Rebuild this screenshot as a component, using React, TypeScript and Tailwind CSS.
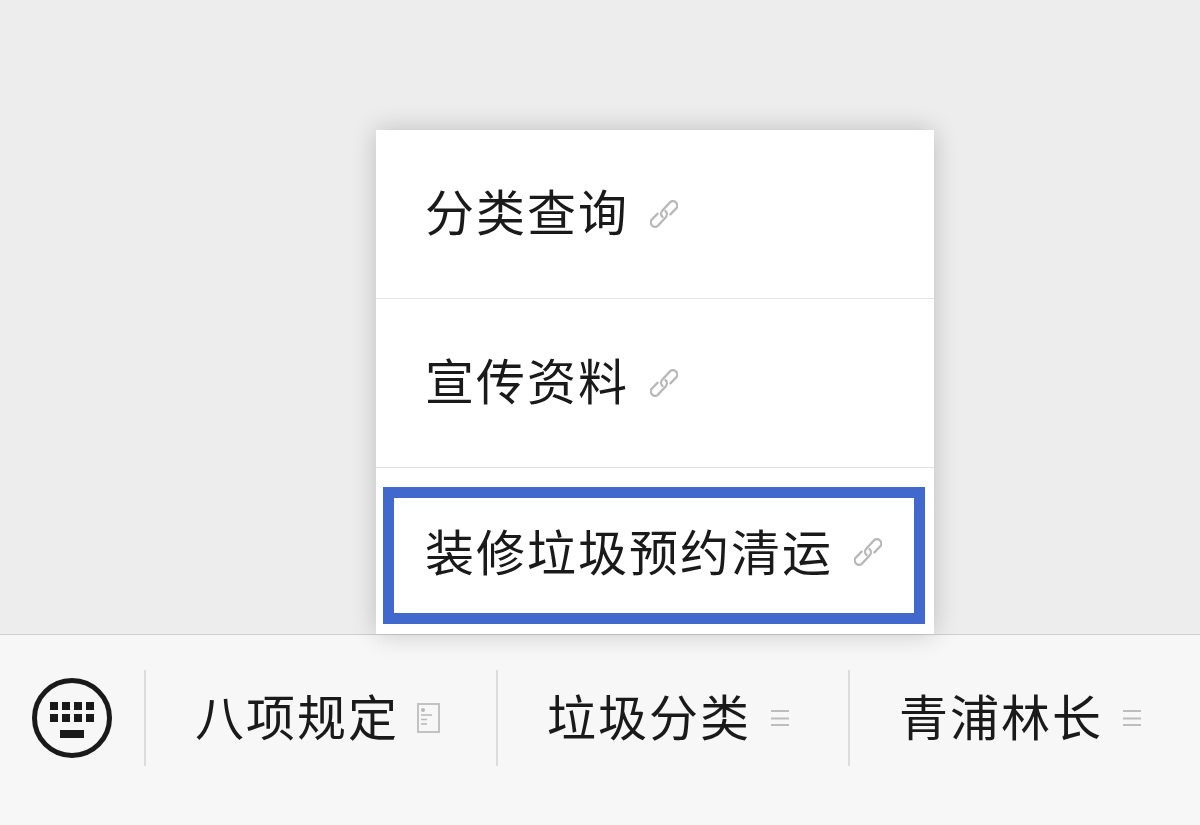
const LinkIcon = () => (
  <svg width="28" height="28" viewBox="3 3 22 22" fill="none" stroke="#b8b8b8" strokeWidth="1.800" strokeLinecap="round" className="shrink-0">
    <path d="M12.800 16.300A3.400 3.400 0 0 1 12.600 11.500L19.200 4.300A3.600 3.600 0 0 1 24 9.200L19 14.300" />
    <path d="M15.200 11.700A3.400 3.400 0 0 1 15.400 16.500L8.800 23.700A3.600 3.600 0 0 1 4 18.800L9 13.700" />
  </svg>
);

const DocIcon = () => (
  <svg width="23" height="30" viewBox="0 0 23 30" fill="none" className="shrink-0">
    <rect x="1" y="1" width="21" height="28" stroke="#c2c2c2" strokeWidth="2" />
    <circle cx="6" cy="7" r="2" fill="#b8b8b8" />
    <path d="M4 12h11M4 16.500h6M4 21h6" stroke="#b8b8b8" strokeWidth="1.500" />
  </svg>
);

const MenuIcon = () => (
  <svg width="18" height="18" viewBox="0 0 18 18" fill="none" stroke="#bdbdbd" strokeWidth="2" className="shrink-0">
    <path d="M0 2h18M0 9.500h18M0 16h18" />
  </svg>
);

const KeyboardIcon = () => (
  <svg width="80" height="80" viewBox="0 0 80 80" fill="none">
    <circle cx="40" cy="40" r="37.500" stroke="#1a1a1a" strokeWidth="5" />
    <g fill="#1a1a1a">
      <rect x="18" y="24" width="8" height="8" />
      <rect x="30" y="24" width="8" height="8" />
      <rect x="42" y="24" width="8" height="8" />
      <rect x="54" y="24" width="8" height="8" />
      <rect x="18" y="36" width="8" height="8" />
      <rect x="30" y="36" width="8" height="8" />
      <rect x="42" y="36" width="8" height="8" />
      <rect x="54" y="36" width="8" height="8" />
      <rect x="28" y="52" width="24" height="8" />
    </g>
  </svg>
);

const labelClass = "text-[49px] leading-[60px] tracking-[2px] text-[#1a1a1a] whitespace-nowrap";

const BarItem = ({ label, icon, gap }: { label: string; icon: React.ReactNode; gap: string }) => (
  <div className={`flex items-center w-[352px] h-full border-l-2 border-[#dcdcdc] pl-[49px] ${gap}`}>
    <span className={`${labelClass} pb-[7px]`}>{label}</span>
    {icon}
  </div>
);

export default function App() {
  return (
    <div
      className="flex flex-col w-[1200px] h-[825px] overflow-hidden bg-[#ededed]"
      style={{ fontFamily: '"Noto Sans CJK SC", sans-serif' }}
    >
      <div className="relative z-10 flex-1 pt-[130px] pl-[376px]">
        <div className="flex flex-col w-[558px] h-[504px] bg-white shadow-[0_0_24px_rgba(0,0,0,0.2)]">
          <div className="flex items-center gap-[21px] h-[169px] pl-[49px] border-b border-[#e2e2e2]">
            <span className={`${labelClass} pb-[8px]`}>分类查询</span>
            <LinkIcon />
          </div>
          <div className="flex items-center gap-[21px] h-[169px] pl-[49px] border-b border-[#e2e2e2]">
            <span className={`${labelClass} pb-[8px]`}>宣传资料</span>
            <LinkIcon />
          </div>
          <div className="pt-[19px] pl-[7px] pr-[9px]">
            <div className="flex items-center gap-[21px] h-[137px] pl-[31px] pb-[7px] border-[11px] border-[#4169cd]">
              <span className={`${labelClass} pb-[4px]`}>装修垃圾预约清运</span>
              <LinkIcon />
            </div>
          </div>
        </div>
      </div>
      <div className="flex items-start h-[191px] pt-[35px] bg-[#f7f7f7] border-t border-[#cfcfcf]">
        <div className="flex items-center justify-center w-[144px] h-[96px]">
          <KeyboardIcon />
        </div>
        <div className="flex h-[96px]">
          <BarItem label="八项规定" icon={<DocIcon />} gap="gap-[18px]" />
          <BarItem label="垃圾分类" icon={<MenuIcon />} gap="gap-[20px]" />
          <BarItem label="青浦林长" icon={<MenuIcon />} gap="gap-[20px]" />
        </div>
      </div>
    </div>
  );
}
